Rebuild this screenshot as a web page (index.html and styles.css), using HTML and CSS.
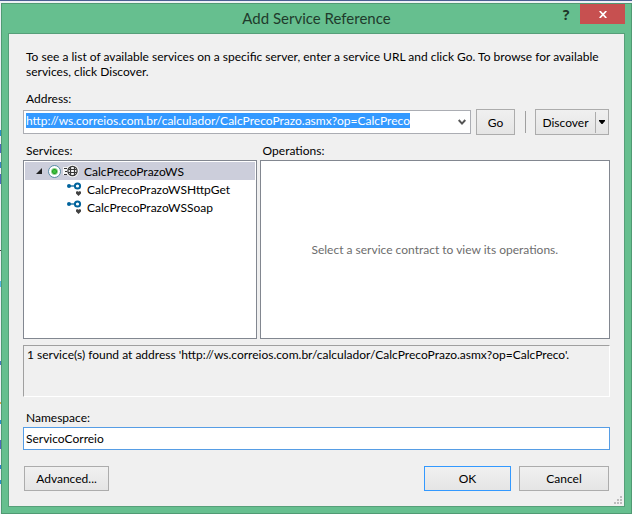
FILE: index.html
```html
<!DOCTYPE html>
<html lang="en">
<head>
<meta charset="utf-8">
<title>Add Service Reference</title>
<link rel="stylesheet" href="styles.css">
</head>
<body>
<main class="window">
  <header class="titlebar">
    <h1 class="title">Add Service Reference</h1>
    <div class="caption-buttons">
      <button class="help" type="button" aria-label="Help">?</button>
      <button class="close" type="button" aria-label="Close">
        <svg width="8" height="7" viewBox="0 0 8 7"><path d="M.7 0 7.3 7M7.3 0 .7 7" stroke="#fff" stroke-width="1.7"/></svg>
      </button>
    </div>
  </header>
  <form class="content">
    <p class="intro">To see a list of available services on a specific server, enter a service URL and click Go. To browse for available services, click Discover.</p>

    <label class="label" for="address">Address:</label>
    <div class="address-row">
      <div class="combo">
        <input id="address" class="combo-input" type="text" spellcheck="false" value="http://ws.correios.com.br/calculador/CalcPrecoPrazo.asmx?op=CalcPreco">
        <button class="combo-arrow" type="button" aria-label="Show addresses">
          <svg width="8" height="7" viewBox="0 0 8 7"><path d="M.7 1 4 4.600 7.300 1" fill="none" stroke="#555" stroke-width="2"/></svg>
        </button>
      </div>
      <button class="button go" type="button">Go</button>
      <span class="divider"></span>
      <div class="split">
        <button class="split-main" type="button">Discover</button>
        <button class="split-arrow" type="button" aria-label="Discover options">
          <svg width="6" height="4" viewBox="0 0 6 4"><path d="M0 0h6v1L3.500 4h-1L0 1z"/></svg>
        </button>
      </div>
    </div>

    <div class="panes">
      <section class="pane services">
        <h2 class="label">Services:</h2>
        <ul class="list tree">
          <li>
            <div class="node selected">
              <svg class="expander" width="6" height="6" viewBox="0 0 6 6"><path d="M6 0v6H0z" fill="#222"/></svg>
              <input class="radio" type="radio" name="service" aria-label="CalcPrecoPrazoWS" checked>
              <svg class="globe" width="16" height="14" viewBox="0 0 16 14">
                <rect x="0" y="3" width="6" height="8" fill="#f6f6f6"/>
                <circle cx="9.500" cy="7" r="6.300" fill="#f6f6f6"/>
                <path d="M1 4.500h3M2 7.500h2M1 10.500h3" stroke="#333"/>
                <circle cx="9.500" cy="7" r="4.600" fill="#f6f6f6" stroke="#383838" stroke-width="1.300"/>
                <path d="M5.500 5.500h8M5 8.500h9M7.500 3v8M11.500 3v8" stroke="#383838" stroke-width="1.200"/>
              </svg>
              <span class="name">CalcPrecoPrazoWS</span>
            </div>
            <ul class="children">
              <li class="node child">
                <svg width="15" height="14" viewBox="0 0 15 14"><circle cx="2" cy="4" r="2" fill="#00639c"/><path d="M2 4h6" stroke="#00639c" stroke-width="1.300"/><circle cx="10.500" cy="4" r="2.600" fill="none" stroke="#00639c" stroke-width="2"/><path d="M11.500 14 9 11.500V10l1-1 1.500.7L13 9l1 1v1.500z" fill="#424242"/></svg>
                <span class="name">CalcPrecoPrazoWSHttpGet</span>
              </li>
              <li class="node child">
                <svg width="15" height="14" viewBox="0 0 15 14"><circle cx="2" cy="4" r="2" fill="#00639c"/><path d="M2 4h6" stroke="#00639c" stroke-width="1.300"/><circle cx="10.500" cy="4" r="2.600" fill="none" stroke="#00639c" stroke-width="2"/><path d="M11.500 14 9 11.500V10l1-1 1.500.7L13 9l1 1v1.500z" fill="#424242"/></svg>
                <span class="name">CalcPrecoPrazoWSSoap</span>
              </li>
            </ul>
          </li>
        </ul>
      </section>
      <section class="pane operations">
        <h2 class="label">Operations:</h2>
        <div class="list empty">Select a service contract to view its operations.</div>
      </section>
    </div>

    <output class="status">1 service(s) found at address 'http://ws.correios.com.br/calculador/CalcPrecoPrazo.asmx?op=CalcPreco'.</output>

    <label class="label" for="namespace">Namespace:</label>
    <input id="namespace" class="namespace" type="text" spellcheck="false" value="ServicoCorreio">

    <footer class="actions">
      <button class="button advanced" type="button">Advanced...</button>
      <button class="button ok" type="button">OK</button>
      <button class="button cancel" type="button">Cancel</button>
    </footer>
    <svg class="grip" width="8" height="8" viewBox="0 0 8 8"><path d="M6 0h2v2H6zM3 3h2v2H3zM6 3h2v2H6zM0 6h2v2H0zM3 6h2v2H3zM6 6h2v2H6z" fill="#bcbcbc"/></svg>
  </form>
</main>
<script src="script.js"></script>
</body>
</html>
```
FILE: styles.css
```css
* {
  box-sizing: border-box;
}

body {
  margin: 0;
  min-height: 100vh;
  display: flex;
  padding: 2px 0 0 1px;
  border-top: 1px solid #4b5f92;
  background: linear-gradient(#eef0f6 0 130px, #2b8fc9 130px 136px, #eef0f6 136px 144px, #4f68bd 144px 153px, #eef0f6 153px 162px, #3b83c4 162px 168px, #eef0f6 168px 174px, #4f68bd 174px 184px, #eef0f6 184px 250px, #444 250px 251px, #eef0f6 251px 281px, #58b9e8 281px 287px, #eef0f6 287px 361px, #4878bd 361px 365px, #eef0f6 365px 402px, #d8a648 402px 404px, #eef0f6 404px 420px, #2b8fc9 420px 424px, #eef0f6 424px 440px, #4f68bd 440px 449px, #eef0f6 449px 465px, #2b7fc9 465px 469px, #eef0f6 469px 480px, #2b8fc9 480px 484px, #eef0f6 484px);
  font-family: Lato, "Open Sans", sans-serif;
  font-size: 12px;
  line-height: 15px;
  color: #000;
}

button,
input {
  font: inherit;
  color: inherit;
  margin: 0;
  padding: 0;
}

h1,
h2,
p,
ul {
  margin: 0;
  padding: 0;
  font: inherit;
  list-style: none;
}

svg {
  display: block;
  flex: none;
}

.window {
  flex: 1;
  display: flex;
  flex-direction: column;
  padding: 0 6px 6px;
  border: 1px solid #509a73;
  background: #66bf8f;
}

.titlebar {
  position: relative;
  height: 29px;
}

.title {
  font-size: 15px;
  line-height: 29px;
  text-align: center;
  color: #1f3b2c;
}

.caption-buttons {
  position: absolute;
  top: 0;
  right: 0;
  display: flex;
}

.help {
  width: 28px;
  height: 20px;
  border: 0;
  background: none;
  font-family: "Open Sans", sans-serif;
  font-size: 14px;
  font-weight: 700;
  color: #1d3528;
}

.close {
  display: flex;
  align-items: center;
  justify-content: center;
  width: 45px;
  height: 20px;
  border: 0;
  background: #c75050;
}

.content {
  position: relative;
  flex: 1;
  display: flex;
  flex-direction: column;
  padding: 15px 14px;
  border: 1px solid #569f79;
  background: #f0f0f0;
}

.intro {
  padding: 0 3px;
  margin-bottom: 12px;
}

.label {
  display: block;
  padding-left: 3px;
}

.address-row {
  display: flex;
  align-items: center;
  margin: 3px 1px 8px 0;
}

.combo {
  flex: 1;
  display: flex;
  height: 24px;
  border: 1px solid #abadb3;
  background: #fff;
}

.combo-input {
  flex: 1;
  min-width: 0;
  height: 15px;
  margin: 2px 0 0 2px;
  border: 0;
  outline: 0;
  background: none;
}

.combo-input::selection {
  background: #3399ff;
  color: #fff;
}

.combo-arrow {
  display: flex;
  align-items: center;
  justify-content: center;
  width: 16px;
  border: 0;
  background: none;
}

.button,
.split {
  border: 1px solid #acacac;
  background: linear-gradient(#f0f0f0, #e5e5e5);
}

.go {
  width: 39px;
  height: 26px;
  margin-left: 5px;
}

.divider {
  width: 1px;
  height: 22px;
  margin: 0 9px 0 10px;
  background: #a0a0a0;
}

.split {
  display: flex;
  align-items: center;
  width: 74px;
  height: 26px;
}

.split-main {
  flex: 1;
  height: 24px;
  border: 0;
  background: none;
}

.split-arrow {
  display: flex;
  align-items: center;
  justify-content: center;
  width: 13px;
  height: 21px;
  border: 0;
  border-left: 1px solid #acacac;
  background: none;
}

.panes {
  flex: 1;
  display: flex;
  gap: 3px;
  margin-bottom: 6px;
}

.pane {
  display: flex;
  flex-direction: column;
  gap: 2px;
}

.services {
  flex: 2;
}

.operations {
  flex: 3;
}

.list {
  flex: 1;
  padding: 1px;
  border: 1px solid #828790;
  background: #fff;
}

.node {
  display: flex;
  align-items: center;
  height: 18px;
}

.selected {
  padding-left: 11px;
  background: #cccedb;
}

.radio {
  appearance: none;
  width: 13px;
  height: 13px;
  margin: 0 2px 0 6px;
  border: 1px solid #5b8ea8;
  border-radius: 50%;
  background: radial-gradient(circle, #3fc13f 0 1px, #21a121 2px, #fff 4px);
}

.globe {
  margin-right: 5px;
}

.child {
  padding-left: 42px;
  gap: 5px;
}

.empty {
  display: flex;
  align-items: center;
  justify-content: center;
  color: #6d6d6d;
}

.status {
  height: 52px;
  padding: 1px 3px;
  margin-bottom: 13px;
  border: 1px solid;
  border-color: #a0a0a0 #fff #fff #a0a0a0;
}

.namespace {
  height: 23px;
  padding: 0 2px;
  margin: 2px 0 16px;
  border: 1px solid #569de5;
  background: #fff;
}

.actions {
  display: flex;
  gap: 8px;
  padding: 0 1px;
}

.actions .button {
  height: 25px;
}

.advanced {
  width: 85px;
  margin-right: auto;
}

.ok {
  width: 87px;
}

.actions .ok {
  border-color: #3399ff;
}

.cancel {
  width: 90px;
}

.grip {
  position: absolute;
  right: 2px;
  bottom: 2px;
}
```
FILE: script.js
```js
const address = document.getElementById('address');
address.focus();
address.select();
```
